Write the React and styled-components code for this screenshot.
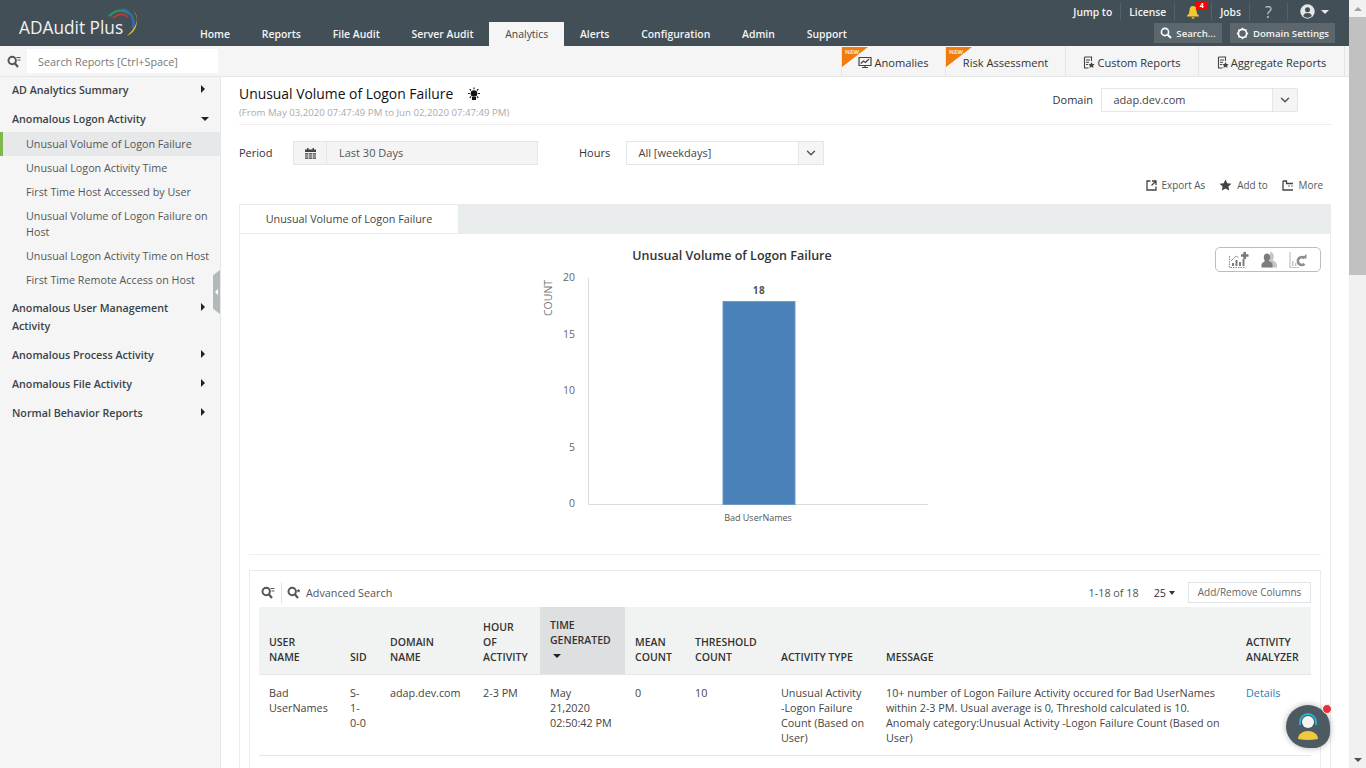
import styled, { createGlobalStyle } from 'styled-components'
import { ChevronDown } from 'lucide-react'

const GlobalStyle = createGlobalStyle`
  html, body {
    margin: 0;
    padding: 0;
    height: 768px;
    overflow: hidden;
    background: #fff;
  }
  body {
    font-family: "Open Sans", "Liberation Sans", sans-serif;
    font-size: 11px;
    color: #333;
  }
  * { box-sizing: border-box; }
`

const navItems = ['Home', 'Reports', 'File Audit', 'Server Audit', 'Analytics', 'Alerts', 'Configuration', 'Admin', 'Support']

const columns = [
  { label: ['USER', 'NAME'], width: 81 },
  { label: ['SID'], width: 40 },
  { label: ['DOMAIN', 'NAME'], width: 93 },
  { label: ['HOUR', 'OF', 'ACTIVITY'], width: 67 },
  { label: ['TIME', 'GENERATED'], width: 85, sorted: true },
  { label: ['MEAN', 'COUNT'], width: 60 },
  { label: ['THRESHOLD', 'COUNT'], width: 86 },
  { label: ['ACTIVITY TYPE'], width: 105 },
  { label: ['MESSAGE'], width: 360 },
  { label: ['ACTIVITY', 'ANALYZER'], width: 75 },
]

function SearchGlyph({ star }) {
  return (
    <svg width="14" height="13" viewBox="0 0 14 13">
      <circle cx="5.2" cy="5.5" r="3.7" fill="none" stroke="#555" strokeWidth="2" />
      <path d="M7.8 8.2 11 12" stroke="#555" strokeWidth="2.2" />
      {star
        ? <path d="M11.5 2.7l.6 1.3 1.4.1-1 1 .3 1.4-1.3-.7-1.2.7.2-1.4-1-1 1.4-.1z" fill="#555" />
        : <path d="M9.5 2.5h4M10.5 5h3" stroke="#555" strokeWidth="1.1" />}
    </svg>
  )
}

function ReportGlyph() {
  return (
    <svg width="12" height="13" viewBox="0 0 12 13">
      <path d="M1.5 1h7v4M1.5 1v11h4" fill="none" stroke="#444" strokeWidth="1.1" />
      <path d="M3 4h4M3 6.3h3M3 8.5h2" stroke="#444" strokeWidth="1" />
      <path d="M8.5 6l1 2 2.2.2-1.6 1.5.4 2.2-2-1.1-2 1.1.4-2.2L5.3 8.2 7.5 8z" fill="#444" />
    </svg>
  )
}

function Logo() {
  return (
    <LogoWrap>
      <LogoText>ADAudit Plus</LogoText>
      <LogoArcs width="36" height="34" viewBox="0 0 36 34">
        <path d="M7 12Q15 5 22 11" fill="none" stroke="#b93a3f" strokeWidth="2" />
        <path d="M3 10Q14 0 24 8" fill="none" stroke="#2f8f5b" strokeWidth="2.4" />
        <path d="M17 3Q30 8 27 22" fill="none" stroke="#2d6fb5" strokeWidth="2.4" />
        <path d="M26 3Q38 14 21 30Q30 26 31 16Q31 8 26 3Z" fill="#e2b93b" />
      </LogoArcs>
    </LogoWrap>
  )
}

function Chart() {
  const ticks = [[20, 277], [15, 334], [10, 390], [5, 447], [0, 503]]
  return (
    <ChartSvg width="1090" height="320" viewBox="240 234 1090 320">
      <text x="732" y="260" textAnchor="middle" fontSize="12.5" fontWeight="600" fill="#333">Unusual Volume of Logon Failure</text>
      <text transform="translate(552 316) rotate(-90)" fontSize="10.5" fill="#777">COUNT</text>
      {ticks.map(([value, y]) => (
        <text key={value} x="575" y={y + 4} textAnchor="end" fontSize="10.5" fill="#666">{value}</text>
      ))}
      <path d="M588.5 278V504.5H928" fill="none" stroke="#d5dde3" />
      <rect x="723" y="301.5" width="72" height="203" fill="#4a81b9" stroke="#6d9ac7" />
      <text x="759" y="294" textAnchor="middle" fontSize="10" fontWeight="700" letterSpacing="0.5" fill="#555">18</text>
      <text x="758" y="521" textAnchor="middle" fontSize="9" fill="#555">Bad UserNames</text>
    </ChartSvg>
  )
}

export default function App() {
  return (
    <Page>
      <GlobalStyle />
      <Main>
        <Header>
          <Logo />
          <Nav>
            {navItems.map(item => (
              <NavItem key={item} $active={item === 'Analytics'}>{item}</NavItem>
            ))}
          </Nav>
          <HeaderRight>
            <TopLinks>
              <TopLink>Jump to</TopLink>
              <TopLink>License</TopLink>
              <TopLink $width={37}>
                <svg width="14" height="14" viewBox="0 0 14 14">
                  <path d="M7 1C4.5 1 3.5 3 3.5 5.5 3.5 8.5 2.5 9.5 1 10.8V11.5H13V10.8C11.5 9.5 10.5 8.5 10.5 5.5 10.5 3 9.5 1 7 1ZM5.5 12.3a1.5 1.5 0 0 0 3 0Z" fill="#f4c92e" />
                </svg>
                <Badge>4</Badge>
              </TopLink>
              <TopLink>Jobs</TopLink>
              <TopLink $width={38}><Question>?</Question></TopLink>
              <UserLink>
                <svg width="15" height="15" viewBox="0 0 15 15">
                  <circle cx="7.5" cy="7.5" r="7.2" fill="#e4e6e7" />
                  <circle cx="7.5" cy="5.8" r="2.5" fill="#434f57" />
                  <path d="M3.2 12C4 9.6 5.5 9 7.5 9S11 9.6 11.8 12A6 6 0 0 1 3.2 12Z" fill="#434f57" />
                </svg>
                <WhiteCaret />
              </UserLink>
            </TopLinks>
            <HeaderButtons>
              <HeaderButton $width={68}>
                <svg width="12" height="12" viewBox="0 0 12 12">
                  <circle cx="5" cy="5" r="3.6" fill="none" stroke="#fff" strokeWidth="1.6" />
                  <path d="M7.7 7.7 11 11" stroke="#fff" strokeWidth="2" />
                </svg>
                Search...
              </HeaderButton>
              <HeaderButton $width={105}>
                <svg width="13" height="13" viewBox="0 0 13 13">
                  <circle cx="6.5" cy="6.5" r="4.1" fill="none" stroke="#fff" strokeWidth="1.7" />
                  <path d="M6.5 .8v2M6.5 10.2v2M.8 6.5h2M10.2 6.5h2M2.5 2.5l1.3 1.3M9.2 9.2l1.3 1.3M2.5 10.5l1.3-1.3M9.2 3.8l1.3-1.3" stroke="#fff" strokeWidth="1.3" />
                </svg>
                Domain Settings
              </HeaderButton>
            </HeaderButtons>
          </HeaderRight>
        </Header>

        <SubBar>
          <SideSearch>
            <SearchGlyph />
            <SideInput>Search Reports [Ctrl+Space]</SideInput>
          </SideSearch>
          <SubTabs>
            <SubTab $width={104} $isNew>
              <svg width="14" height="13" viewBox="0 0 14 13">
                <path d="M1 1.5h12v8H1z" fill="none" stroke="#444" strokeWidth="1.2" />
                <path d="M2.8 7.5 5.5 5l2 1.5L11 3M4 11.5h6M7 9.5v2" fill="none" stroke="#444" strokeWidth="1.2" />
              </svg>
              Anomalies
            </SubTab>
            <SubTab $width={120} $isNew>Risk Assessment</SubTab>
            <SubTab $width={133}><ReportGlyph />Custom Reports</SubTab>
            <SubTab $width={147}><ReportGlyph />Aggregate Reports</SubTab>
          </SubTabs>
        </SubBar>

        <Body>
          <Sidebar>
            <TopItem $arrow="right">AD Analytics Summary</TopItem>
            <TopItem $arrow="down">Anomalous Logon Activity</TopItem>
            <SubList>
              <SubItem $active>Unusual Volume of Logon Failure</SubItem>
              <SubItem>Unusual Logon Activity Time</SubItem>
              <SubItem>First Time Host Accessed by User</SubItem>
              <SubItem>Unusual Volume of Logon Failure on Host</SubItem>
              <SubItem>Unusual Logon Activity Time on Host</SubItem>
              <SubItem>First Time Remote Access on Host</SubItem>
            </SubList>
            <TopItem $arrow="right">Anomalous User Management Activity</TopItem>
            <TopItem $arrow="right">Anomalous Process Activity</TopItem>
            <TopItem $arrow="right">Anomalous File Activity</TopItem>
            <TopItem $arrow="right">Normal Behavior Reports</TopItem>
            <Collapse />
          </Sidebar>

          <Content>
            <TitleRow>
              <div>
                <Title>
                  Unusual Volume of Logon Failure
                  <svg width="14" height="14" viewBox="0 0 14 14">
                    <circle cx="7" cy="6.5" r="3.3" fill="#111" />
                    <path d="M5.5 10.5h3v2h-3zM7 .5v1.8M1 6.5h1.8M11.2 6.5H13M2.7 2.2 4 3.5M11.3 2.2 10 3.5M2.7 10.8 4 9.5M11.3 10.8 10 9.5" stroke="#111" strokeWidth="1.1" fill="#111" />
                  </svg>
                </Title>
                <DateRange>(From May 03,2020 07:47:49 PM to Jun 02,2020 07:47:49 PM)</DateRange>
              </div>
              <DomainPick>
                <FieldLabel>Domain</FieldLabel>
                <Select $width={197}>
                  <span>adap.dev.com</span>
                  <SelectArrow><ChevronDown size={14} strokeWidth={2.5} /></SelectArrow>
                </Select>
              </DomainPick>
            </TitleRow>

            <FilterRow>
              <FieldLabel $width={54}>Period</FieldLabel>
              <PeriodBox>
                <PeriodIcon>
                  <svg width="11" height="11" viewBox="0 0 11 11">
                    <path d="M0 1.5h2V0h1.5v1.5h4V0H9v1.5h2V4H0Z" fill="#444" />
                    <path d="M0 5h11v6H0Z" fill="#666" />
                    <path d="M0 7h11M0 9h11M3.5 5v6M7.5 5v6" stroke="#f4f4f4" strokeWidth=".6" />
                  </svg>
                </PeriodIcon>
                <span>Last 30 Days</span>
              </PeriodBox>
              <FieldLabel $width={47} $left={41}>Hours</FieldLabel>
              <Select $width={198}>
                <span>All [weekdays]</span>
                <SelectArrow><ChevronDown size={14} strokeWidth={2.5} /></SelectArrow>
              </Select>
            </FilterRow>

            <ActionRow>
              <Action>
                <svg width="11" height="11" viewBox="0 0 11 11">
                  <path d="M4.5 1H1v9h9V6.5M6 1h4v4M10 1 5.5 5.5" fill="none" stroke="#444" strokeWidth="1.3" />
                </svg>
                Export As
              </Action>
              <Action>
                <svg width="13" height="12" viewBox="0 0 13 12">
                  <path d="M6.5 .5 8.3 4.2l4.1.5-3 2.8.8 4-3.7-2-3.7 2 .8-4-3-2.8 4.1-.5z" fill="#444" />
                </svg>
                Add to
              </Action>
              <Action>
                <svg width="12" height="11" viewBox="0 0 12 11">
                  <path d="M1 1v9h10M1 1h3.5v2.5H11" fill="none" stroke="#444" strokeWidth="1.3" />
                  <path d="M6.5 6h1M9.5 6h1" stroke="#444" strokeWidth="1.3" />
                </svg>
                More
              </Action>
            </ActionRow>

            <TabPanel>
              <TabBar><Tab>Unusual Volume of Logon Failure</Tab></TabBar>
              <ChartArea>
                <Chart />
                <ChartTools>
                  <svg width="20" height="16" viewBox="0 0 20 16">
                    <path d="M.5 4v11.5h15.5" fill="none" stroke="#888" strokeDasharray="1.5 1" />
                    <path d="M3 14V11H5V14ZM6.5 14V8H8.5V14ZM10 14V10H12V14ZM13.5 14V7H15.5V14Z" fill="#7c7c7c" />
                    <path d="M2 9 7 4l2.5 1.5" fill="none" stroke="#999" />
                    <path d="M12 3.5h7.5M15.7 0v7" stroke="#777" strokeWidth="2.6" />
                  </svg>
                  <svg width="16" height="16" viewBox="0 0 16 16">
                    <path d="M9 0c3 0 3.8 2.5 3.8 4.5 0 2-1 2.7-1 3.7 1.5 1.2 4.2 1.8 4.2 5.3v2H9Z" fill="#c4c4c4" />
                    <path d="M6 1.5c2.3 0 3.2 1.8 3.2 4 0 1.800-1 2.500-1 3.500 1 1 2.800 1.300 3.300 3v3.500H.5V12.500C1.200 10.500 3 10 3.800 9 3.600 8 2.800 7.300 2.800 5.500 2.800 3.300 3.700 1.500 6 1.500Z" fill="#7c7c7c" />
                  </svg>
                  <svg width="18" height="16" viewBox="0 0 18 16">
                    <path d="M1 0v15.5h9" fill="none" stroke="#c4c4c4" strokeWidth="1.2" />
                    <path d="M3 14V9H4.5V14ZM6 14V11H7.5V14Z" fill="#c4c4c4" />
                    <path d="M15.5 6A4 4 0 1 0 15.5 12" fill="none" stroke="#8e8e8e" strokeWidth="2.6" />
                    <path d="M12.5 6.5H17.5V2Z" fill="#8e8e8e" />
                  </svg>
                </ChartTools>
              </ChartArea>
              <ChartDivider />
              <TablePanel>
                <TableTools>
                  <SearchToggle><SearchGlyph /></SearchToggle>
                  <AdvSearch><SearchGlyph star />Advanced Search</AdvSearch>
                  <Pager>
                    <span>1-18 of 18</span>
                    <PageSize>25<DarkCaret /></PageSize>
                    <ColumnsButton>Add/Remove Columns</ColumnsButton>
                  </Pager>
                </TableTools>
                <Table>
                  <colgroup>
                    {columns.map(col => <col key={col.label.join()} width={col.width} />)}
                  </colgroup>
                  <thead>
                    <tr>
                      {columns.map(col => (
                        <Th key={col.label.join()} $sorted={col.sorted}>
                          {col.label.map(line => <div key={line}>{line}</div>)}
                          {col.sorted && <SortCaret />}
                        </Th>
                      ))}
                    </tr>
                  </thead>
                  <tbody>
                    <tr>
                      <Td>Bad UserNames</Td>
                      <Td>S-<br />1-<br />0-0</Td>
                      <Td>adap.dev.com</Td>
                      <Td>2-3 PM</Td>
                      <Td>May<br />21,2020<br />02:50:42 PM</Td>
                      <Td>0</Td>
                      <Td>10</Td>
                      <Td>Unusual Activity -Logon Failure Count (Based on User)</Td>
                      <Td>10+ number of Logon Failure Activity occured for Bad UserNames within 2-3 PM. Usual average is 0, Threshold calculated is 10. Anomaly category:Unusual Activity -Logon Failure Count (Based on User)</Td>
                      <Td><DetailsLink>Details</DetailsLink></Td>
                    </tr>
                  </tbody>
                </Table>
              </TablePanel>
            </TabPanel>
          </Content>
        </Body>
      </Main>

      <Scrollbar>
        <ScrollArrow $up />
        <ScrollThumb />
        <ScrollTrack />
        <ScrollArrow />
      </Scrollbar>

      <ChatBubble>
        <ChatDot />
        <svg width="26" height="32" viewBox="0 0 26 32">
          <path d="M5 14V11a8 8 0 0 1 16 0v3" fill="none" stroke="#22b8cf" strokeWidth="1.8" />
          <circle cx="13" cy="11" r="6" fill="#f4f4f4" />
          <path d="M3 28C3 23 8 20 13 20S23 23 23 28Q13 30 3 28Z" fill="#eec93f" />
        </svg>
      </ChatBubble>
    </Page>
  )
}

const Page = styled.div`
  display: flex;
  width: 1366px;
  height: 768px;
  overflow: hidden;
  position: relative;
`

const Main = styled.div`
  width: 1349px;
  height: 768px;
  display: flex;
  flex-direction: column;
  min-width: 0;
  overflow: hidden;
`

const Header = styled.header`
  height: 46px;
  flex-shrink: 0;
  background: #434f57;
  display: flex;
  position: relative;
`

const LogoWrap = styled.div`
  width: 184px;
  position: relative;
`

const LogoText = styled.span`
  position: absolute;
  left: 19px;
  top: 16px;
  font-size: 17.3px;
  color: #f1f1f1;
  white-space: nowrap;
`

const LogoArcs = styled.svg`
  position: absolute;
  left: 106px;
  top: 6px;
`

const Nav = styled.nav`
  display: flex;
  align-items: flex-end;
`

const NavItem = styled.a`
  height: 24px;
  padding: 0 15.9px;
  line-height: 24px;
  font-size: 10.42px;
  font-weight: ${p => (p.$active ? 400 : 600)};
  color: ${p => (p.$active ? '#444' : '#f4f4f4')};
  background: ${p => (p.$active ? '#f5f5f5' : 'transparent')};
  white-space: nowrap;
`

const HeaderRight = styled.div`
  margin-left: auto;
  padding-right: 14px;
  display: flex;
  flex-direction: column;
  align-items: flex-end;
`

const TopLinks = styled.div`
  height: 23px;
  display: flex;
  align-items: center;
  color: #f4f4f4;
  font-size: 10.3px;
  font-weight: 600;
`

const TopLink = styled.span`
  position: relative;
  display: flex;
  align-items: center;
  justify-content: center;
  height: 17px;
  width: ${p => (p.$width ? `${p.$width}px` : 'auto')};
  padding: 0 ${p => (p.$width ? 0 : 8)}px;
  border-right: 1px solid #56626a;
`

const UserLink = styled.span`
  display: flex;
  align-items: center;
  gap: 6px;
  padding: 0 0 0 12px;
  width: 47px;
`

const Question = styled.span`
  font-size: 16px;
  font-weight: 400;
  color: #bcc2c6;
`

const Badge = styled.span`
  position: absolute;
  top: -1px;
  right: 4px;
  width: 11px;
  height: 8px;
  background: #f00;
  color: #fff;
  font-size: 7px;
  line-height: 8px;
  text-align: center;
  font-weight: 700;
`

const WhiteCaret = styled.i`
  width: 0;
  height: 0;
  border-left: 4px solid transparent;
  border-right: 4px solid transparent;
  border-top: 4px solid #e4e6e7;
`

const HeaderButtons = styled.div`
  display: flex;
  gap: 8px;
  height: 20px;
`

const HeaderButton = styled.button`
  width: ${p => p.$width}px;
  height: 20px;
  border: 0;
  padding: 0;
  background: #5b666d;
  color: #f4f4f4;
  font: 600 9.6px "Open Sans", sans-serif;
  white-space: nowrap;
  display: flex;
  align-items: center;
  justify-content: center;
  gap: 4px;
`

const SubBar = styled.div`
  height: 31px;
  flex-shrink: 0;
  background: #f5f5f5;
  border-bottom: 1px solid #e4e7e8;
  display: flex;
  justify-content: space-between;
`

const SideSearch = styled.div`
  width: 218px;
  display: flex;
  align-items: center;
  gap: 6px;
  padding-left: 7px;
`

const SideInput = styled.div`
  flex: 1;
  height: 24px;
  background: #fff;
  color: #777;
  font-size: 10.8px;
  line-height: 26px;
  padding-left: 11px;
`

const SubTabs = styled.div`
  display: flex;
  padding-right: 4px;
`

const SubTab = styled.div`
  position: relative;
  width: ${p => p.$width}px;
  padding-top: 2px;
  border-left: 1px solid #e3e6e7;
  font-size: 11.1px;
  color: #333;
  display: flex;
  align-items: center;
  justify-content: center;
  gap: 2px;
  white-space: nowrap;

  &:last-child {
    border-right: 1px solid #e3e6e7;
  }

  ${p => p.$isNew && `
    &::before {
      content: "";
      position: absolute;
      left: 0;
      top: 1px;
      border-top: 20px solid #f07b0e;
      border-right: 26px solid transparent;
    }
    &::after {
      content: "NEW";
      position: absolute;
      left: 3px;
      top: 2px;
      font-size: 6px;
      font-weight: 700;
      line-height: 8px;
      color: #ffe6c9;
    }
  `}
`

const Body = styled.div`
  flex: 1;
  display: flex;
  min-height: 0;
`

const Sidebar = styled.aside`
  width: 221px;
  flex-shrink: 0;
  background: #f5f5f5;
  border-right: 1px solid #e4e7e8;
  position: relative;
`

const TopItem = styled.div`
  position: relative;
  padding: 4px 40px ${p => (p.$arrow === 'down' ? 4 : 6)}px 12px;
  line-height: 18px;
  font-size: 10.7px;
  font-weight: 600;
  color: #3b4348;
  margin-bottom: ${p => (p.$arrow === 'down' ? 0 : 1)}px;

  &::after {
    content: "";
    position: absolute;
    top: 8px;
    right: ${p => (p.$arrow === 'down' ? 11 : 15)}px;
    ${p => (p.$arrow === 'down'
      ? `top: 11px;
         border-left: 4px solid transparent;
         border-right: 4px solid transparent;
         border-top: 4px solid #222;`
      : `border-top: 4px solid transparent;
         border-bottom: 4px solid transparent;
         border-left: 4px solid #222;`)}
  }
`

const SubList = styled.div`
  margin-bottom: 3px;
`

const SubItem = styled.div`
  padding: 4px 8px 4px 23px;
  line-height: 16px;
  font-size: 10.75px;
  color: #555;
  border-left: 3px solid ${p => (p.$active ? '#7db84a' : 'transparent')};
  background: ${p => (p.$active ? '#e6e8ea' : 'transparent')};
`

const Collapse = styled.div`
  position: absolute;
  right: 0;
  top: 193px;
  width: 7px;
  height: 44px;
  background: #b3b8ba;
  clip-path: polygon(100% 0, 100% 100%, 0 88%, 0 12%);

  &::after {
    content: "";
    position: absolute;
    left: 2px;
    top: 19px;
    border-top: 3px solid transparent;
    border-bottom: 3px solid transparent;
    border-right: 3px solid #fff;
  }
`

const Content = styled.main`
  flex: 1;
  min-width: 0;
  padding: 0 18px;
`

const TitleRow = styled.div`
  height: 48px;
  border-bottom: 1px solid #eee;
  display: flex;
  justify-content: space-between;
  padding: 7px 33px 0 0;
`

const Title = styled.h1`
  margin: 0;
  font-size: 13.9px;
  font-weight: 400;
  line-height: 20px;
  color: #111;
  display: flex;
  align-items: center;
  gap: 14px;
`

const DateRange = styled.div`
  margin-top: 2px;
  font-size: 9.65px;
  line-height: 14px;
  color: #aaa;
`

const DomainPick = styled.div`
  display: flex;
  align-items: center;
  gap: 8px;
  height: 24px;
  margin-top: 4px;
`

const FieldLabel = styled.span`
  width: ${p => (p.$width ? `${p.$width}px` : 'auto')};
  margin: -2px 0 0 ${p => p.$left || 0}px;
  font-size: 11px;
  color: #333;
`

const Select = styled.div`
  width: ${p => p.$width}px;
  height: 24px;
  border: 1px solid #e4e7e8;
  background: #fff;
  display: flex;
  align-items: center;
  justify-content: space-between;
  padding-left: 11.5px;
  font-size: 11px;
  color: #444;

  > span:first-child {
    margin-top: -1px;
  }
`

const SelectArrow = styled.span`
  width: 25px;
  height: 22px;
  background: #f5f5f5;
  border-left: 1px solid #e4e7e8;
  display: flex;
  align-items: center;
  justify-content: center;
  color: #555;
`

const FilterRow = styled.div`
  display: flex;
  align-items: center;
  margin-top: 16px;
`

const PeriodBox = styled.div`
  width: 245px;
  height: 24px;
  background: #f4f4f4;
  border: 1px solid #e4e7e8;
  display: flex;
  align-items: center;
  font-size: 11px;
  color: #555;

  > span:last-child {
    margin-top: -1px;
  }
`

const PeriodIcon = styled.span`
  width: 33px;
  height: 22px;
  margin-right: 12px;
  border-right: 1px solid #e4e7e8;
  display: flex;
  align-items: center;
  justify-content: center;
`

const ActionRow = styled.div`
  display: flex;
  justify-content: flex-end;
  gap: 14px;
  margin-top: 12px;
  padding-right: 8px;
  height: 16px;
`

const Action = styled.span`
  display: flex;
  align-items: center;
  gap: 5px;
  font-size: 9.9px;
  color: #555;
`

const TabPanel = styled.section`
  margin-top: 11px;
  border: 1px solid #e9eced;
  border-top: 0;
`

const TabBar = styled.div`
  height: 30px;
  background: #e9eced;
  padding: 1px 0;
`

const Tab = styled.div`
  width: 218px;
  height: 28px;
  background: #fff;
  font-size: 10.8px;
  line-height: 28px;
  text-align: center;
  color: #444;
`

const ChartArea = styled.div`
  position: relative;
  height: 320px;
`

const ChartSvg = styled.svg`
  display: block;
  font-family: "Open Sans", sans-serif;
`

const ChartTools = styled.div`
  position: absolute;
  right: 9px;
  top: 13px;
  width: 106px;
  height: 25px;
  border: 1px solid #bdbdbd;
  border-radius: 5px;
  display: flex;
  align-items: center;
  justify-content: center;
  gap: 12px;
`

const ChartDivider = styled.hr`
  margin: 0 9px;
  border: 0;
  border-top: 1px solid #eee;
`

const TablePanel = styled.div`
  margin: 15px 9px 0;
  border: 1px solid #e9eced;
  padding: 0 9px;
  min-height: 300px;
`

const TableTools = styled.div`
  height: 36px;
  display: flex;
  align-items: center;
  padding-top: 7px;
`

const SearchToggle = styled.span`
  width: 23px;
  height: 22px;
  display: flex;
  align-items: center;
  padding-left: 2px;
  border-right: 1px solid #e4e7e8;
`

const AdvSearch = styled.span`
  display: flex;
  align-items: center;
  gap: 5px;
  margin-left: 5px;
  font-size: 10.8px;
  color: #555;
`

const Pager = styled.div`
  margin-left: auto;
  display: flex;
  align-items: center;
  font-size: 10.8px;
  color: #555;
`

const PageSize = styled.span`
  display: flex;
  align-items: center;
  gap: 3px;
  margin: 0 13px 0 15px;
  color: #333;
`

const DarkCaret = styled.i`
  border-left: 3.5px solid transparent;
  border-right: 3.5px solid transparent;
  border-top: 4px solid #333;
`

const ColumnsButton = styled.span`
  width: 123px;
  height: 21px;
  border: 1px solid #e0e4e6;
  font-size: 10px;
  line-height: 19px;
  text-align: center;
  color: #666;
`

const Table = styled.table`
  width: 1052px;
  border-collapse: collapse;
  table-layout: fixed;
`

const Th = styled.th`
  background: ${p => (p.$sorted ? '#dddfe1' : '#f1f3f3')};
  border-bottom: 1px solid #e4e7e8;
  padding: 0 10px ${p => (p.$sorted ? 10 : 9)}px;
  height: 67px;
  vertical-align: bottom;
  text-align: left;
  font-size: 10.5px;
  font-weight: 600;
  line-height: 15px;
  color: #333;
`

const SortCaret = styled.i`
  display: block;
  width: 0;
  margin: 6px 0 6px 3px;
  border-left: 4px solid transparent;
  border-right: 4px solid transparent;
  border-top: 4px solid #222;
`

const Td = styled.td`
  padding: 10px;
  border-bottom: 1px solid #e4e7e8;
  vertical-align: top;
  font-size: 10.8px;
  line-height: 15px;
  color: #444;
`

const DetailsLink = styled.a`
  color: #2d7ab8;
`

const Scrollbar = styled.div`
  width: 17px;
  background: #f1f1f1;
  display: flex;
  flex-direction: column;
`

const ScrollArrow = styled.div`
  height: 17px;
  display: flex;
  align-items: center;
  justify-content: center;

  &::after {
    content: "";
    border-left: 4px solid transparent;
    border-right: 4px solid transparent;
    ${p => (p.$up ? 'border-bottom: 4px solid #a3a3a3;' : 'border-top: 4px solid #505050;')}
  }
`

const ScrollThumb = styled.div`
  height: 258px;
  background: #c1c1c1;
`

const ScrollTrack = styled.div`
  flex: 1;
`

const ChatBubble = styled.div`
  position: absolute;
  left: 1286px;
  top: 705px;
  width: 44px;
  height: 43px;
  background: #4e5a62;
  border-radius: 50% 50% 16px 50%;
  box-shadow: 0 0 6px rgba(0, 0, 0, .3);
  display: flex;
  align-items: center;
  justify-content: center;
`

const ChatDot = styled.i`
  position: absolute;
  right: -2px;
  top: -1px;
  width: 10px;
  height: 10px;
  border-radius: 50%;
  background: #e8333a;
  border: 1px solid #f4f4f4;
`
